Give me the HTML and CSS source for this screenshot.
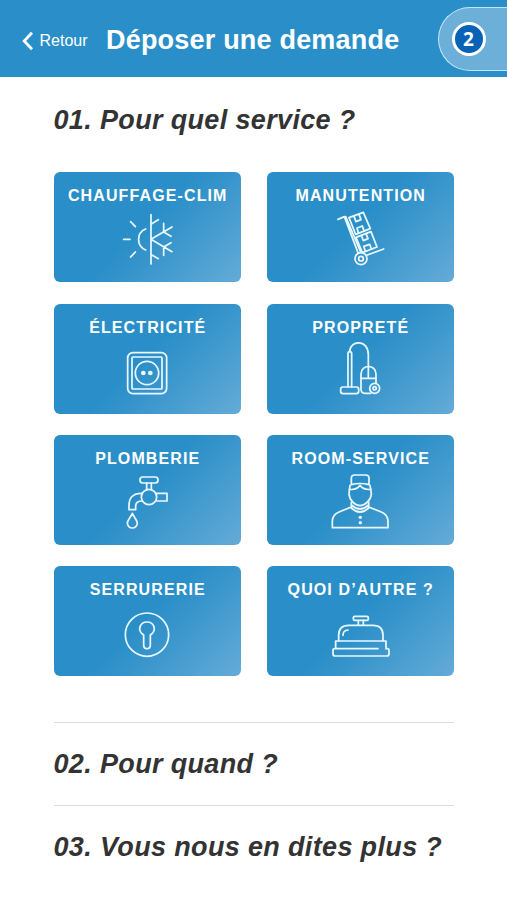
FILE: index.html
```
<!DOCTYPE html>
<html lang="fr">
<head>
    <meta charset="UTF-8">
    <meta name="viewport" content="width=device-width, initial-scale=1.0">
    <title>Déposer une demande</title>
    <link rel="stylesheet" href="styles.css">
</head>
<body>
    <header class="header">
        <a class="back">
            <svg class="back-icon" viewBox="0 0 12 20"><path d="M10 1.8 L2.2 10 L10 18.2"/></svg>
            <span>Retour</span>
        </a>
        <h1 class="title">Déposer une demande</h1>
        <div class="requests">
            <span class="badge">2</span>
        </div>
    </header>

    <main class="content">
        <section class="step step-open">
            <h2>01. Pour quel service ?</h2>
            <div class="services">
                <a class="card">
                    <span class="card-name">CHAUFFAGE-CLIM</span>
                    <svg class="icon" viewBox="192 129 198 168">
                        <path d="M303 140 V288 M303 214 L366 177 M303 214 L366 251 M341 166 V192 L363 205 M341 262 V237 L363 224 M304 168 L325 155 M304 260 L325 272"/>
                        <path d="M287 183 A34 34 0 0 0 287 246 M221 214 H240 M242 161 L256 176 M242 267 L256 252"/>
                    </svg>
                </a>
                <a class="card">
                    <span class="card-name">MANUTENTION</span>
                    <svg class="icon" viewBox="196 129 198 168">
                        <path d="M229 154 L248 146 L289 254 M252 146 L297 252 M317 261 L366 243"/>
                        <path d="M262 149 L305 133 L326 182 L282 199 Z M283 208 L328 191 L346 237 L302 254 Z"/>
                        <path d="M277 145 L283 161 L298 155 L292 139 M290 194 L286 180 L302 174 L307 188 M299 202 L305 218 L319 212 L313 197 M311 249 L306 235 L324 229 L329 243"/>
                        <circle cx="298" cy="272" r="18"/>
                        <circle cx="298" cy="272" r="7"/>
                    </svg>
                </a>
                <a class="card">
                    <span class="card-name">ÉLECTRICITÉ</span>
                    <svg class="icon" viewBox="192 126 198 168">
                        <rect x="233" y="158" width="117" height="123" rx="16"/>
                        <rect x="246" y="171" width="90" height="96" rx="3"/>
                        <circle cx="291" cy="219" r="35"/>
                        <circle class="solid" cx="280" cy="219" r="7"/>
                        <circle class="solid" cx="301" cy="219" r="7"/>
                    </svg>
                </a>
                <a class="card">
                    <span class="card-name">PROPRETÉ</span>
                    <svg class="icon" viewBox="196 126 198 168">
                        <path d="M259 260 V161 Q259 155 264 155 Q270 155 270 161 V260"/>
                        <rect x="237" y="261" width="54" height="20" rx="7"/>
                        <path d="M264 155 C265 119 320 117 320 164 V234"/>
                        <path d="M327 280 H310 Q298 280 298 267 V222 C298 192 343 192 343 222 V250 M298 235 H343"/>
                        <circle cx="339" cy="265" r="15"/>
                        <circle cx="339" cy="265" r="5"/>
                    </svg>
                </a>
                <a class="card">
                    <span class="card-name">PLOMBERIE</span>
                    <svg class="icon" viewBox="192 131 198 168">
                        <rect x="270" y="140" width="54" height="18" rx="8"/>
                        <path d="M290 158 V178 M304 158 V178 M276 189 C248 188 237 203 237 226 V238 H257 V226 Q258 212 277 212 M319 189 H351 V212 H319"/>
                        <circle cx="297" cy="200" r="23"/>
                        <path d="M247 249 C240 264 232 270 232 278 A15 15 0 0 0 262 278 C262 270 254 264 247 249 Z"/>
                    </svg>
                </a>
                <a class="card">
                    <span class="card-name">ROOM-SERVICE</span>
                    <svg class="icon" viewBox="196 131 198 168">
                        <path d="M269 163 V143 Q269 134 279 134 H312 Q322 134 322 143 V163 Q295 156 269 163 Z"/>
                        <path d="M265 165 L262 190 C263 210 281 226 295 226 S328 210 329 190 L325 165"/>
                        <path d="M263 177 Q285 180 295 165 Q305 180 328 177"/>
                        <path d="M269 216 V233 Q295 257 321 233 V216 M269 224 Q295 248 321 224"/>
                        <path d="M269 230 L232 245 Q212 254 212 272 V292 H379 V272 Q379 254 359 245 L321 230"/>
                        <circle class="solid" cx="296" cy="261" r="5"/>
                        <circle class="solid" cx="296" cy="277" r="5"/>
                    </svg>
                </a>
                <a class="card">
                    <span class="card-name">SERRURERIE</span>
                    <svg class="icon" viewBox="192 128 198 168">
                        <circle cx="291" cy="217" r="65"/>
                        <path d="M281 218 V247 Q281 259 291 259 Q301 259 301 247 V218 C323 203 311 179 291 179 S259 203 281 218 Z"/>
                    </svg>
                </a>
                <a class="card">
                    <span class="card-name">QUOI D’AUTRE ?</span>
                    <svg class="icon" viewBox="196 128 198 168">
                        <rect x="275" y="162" width="45" height="12" rx="4"/>
                        <path d="M290 174 V188 M305 174 V188"/>
                        <path d="M231 235 V219 Q231 189 261 189 H334 Q364 189 364 219 V235"/>
                        <path d="M244 219 Q244 204 259 203"/>
                        <path d="M222 259 V236 H373 V259 M222 259 H349 M373 259 H377 Q382 259 382 264 V274 Q382 281 375 281 H221 Q214 281 214 274 V264 Q214 259 219 259"/>
                    </svg>
                </a>
            </div>
        </section>
        <section class="step">
            <h2>02. Pour quand ?</h2>
        </section>
        <section class="step">
            <h2>03. Vous nous en dites plus ?</h2>
        </section>
    </main>
</body>
</html>
```

FILE: styles.css
```
* {
    box-sizing: border-box;
}

body {
    margin: 0;
    background-color: #fff;
    font-family: "Liberation Sans", Arial, sans-serif;
    color: #333;
}

/* Header */
.header {
    display: flex;
    align-items: center;
    height: 77px;
    padding-left: 22px;
    background-color: #2a8fc8;
    color: #fff;
}

.back {
    display: flex;
    align-items: center;
    gap: 5.5px;
    width: 84px;
    margin-top: 4px;
    font-size: 16px;
}

.back-icon {
    width: 12px;
    height: 20px;
    fill: none;
    stroke: #fff;
    stroke-width: 2.8;
}

.title {
    margin: 3px 0 0;
    font-size: 27px;
    letter-spacing: 0.2px;
    white-space: nowrap;
}

.requests {
    display: flex;
    align-items: center;
    width: 69.5px;
    height: 64px;
    margin-left: auto;
    padding-left: 13px;
    border: 1.5px solid #c3e7fa;
    border-right: none;
    border-radius: 32px 0 0 32px;
    background-color: #6cafd9;
}

.badge {
    width: 34px;
    height: 34px;
    border: 3px solid #fff;
    border-radius: 50%;
    background-color: #0862b5;
    font-family: "Open Sans", sans-serif;
    font-size: 19px;
    font-weight: 700;
    line-height: 28px;
    text-align: center;
}

/* Steps */
.content {
    padding: 0 53px 0 53.5px;
}

.step {
    height: 83px;
    padding-top: 25px;
    border-top: 1px solid #dcdcdc;
}

.step-open {
    height: 645px;
    padding-top: 27px;
    border-top: none;
}

.step h2 {
    margin: 0;
    font-size: 27px;
    font-style: italic;
    line-height: 32px;
    letter-spacing: 0.35px;
    white-space: nowrap;
}

/* Service cards */
.services {
    display: grid;
    grid-template-columns: 1fr 1fr;
    grid-auto-rows: 110px;
    gap: 21.3px 25.5px;
    margin-top: 36.4px;
}

.card {
    display: flex;
    flex-direction: column;
    align-items: center;
    padding-top: 15px;
    border-radius: 6px;
    background: linear-gradient(135deg, #2a8fc8 48%, #3493ca 58%, #479dd0 75%, #65abd7 100%);
    color: #fff;
}

.card-name {
    padding-left: 1px;
    font-size: 16px;
    font-weight: bold;
    line-height: 18px;
    letter-spacing: 1.12px;
}

.icon {
    width: 66px;
    height: 56px;
    margin-top: 5.7px;
    fill: none;
    stroke: #e9f8ff;
    stroke-width: 5.2;
    stroke-linecap: round;
    stroke-linejoin: round;
}

.icon .solid {
    fill: #e9f8ff;
    stroke: none;
}
```
